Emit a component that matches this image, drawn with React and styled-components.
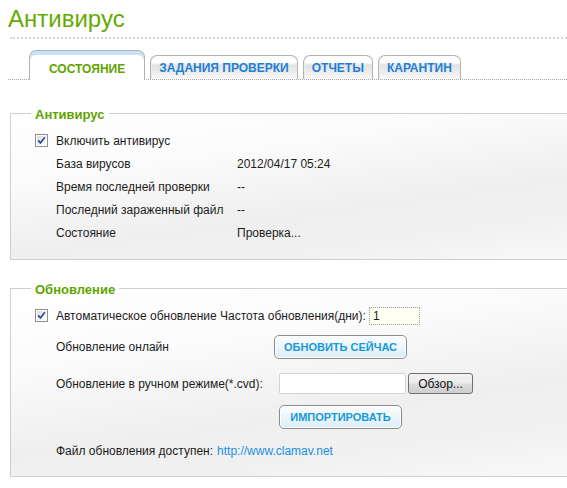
import React from 'react';
import styled, { createGlobalStyle } from 'styled-components';

const GlobalStyle = createGlobalStyle`
  html, body {
    margin: 0;
    padding: 0;
    background: #ffffff;
    overflow: hidden;
  }
  body {
    font-family: 'Liberation Sans', Arial, sans-serif;
    font-size: 12px;
    color: #1c1c1c;
  }
`;

const Page = styled.div`
  padding: 5px 0 0 8px;
  width: 559px;
`;

const Title = styled.h1`
  margin: 0;
  font-family: 'Liberation Sans', Arial, sans-serif;
  font-weight: normal;
  font-size: 24px;
  line-height: 28px;
  color: #66aa00;
`;

const Divider = styled.div`
  margin: 4px 0 0 2px;
  border-top: 2px dotted #d9d9d9;
`;

const TabBar = styled.div`
  display: flex;
  align-items: flex-end;
  gap: 5px;
  margin-top: 11px;
  padding-left: 21px;
  border-bottom: 1px dotted #a8a8a8;
`;

const Tab = styled.div`
  box-sizing: border-box;
  height: ${(p) => (p.$active ? '30px' : '24px')};
  margin-bottom: ${(p) => (p.$active ? '-1px' : '0')};
  padding: ${(p) => (p.$active ? '11px 19px 0' : '5px 8px 0')};
  border: 1px solid #b3b3b3;
  border-bottom: none;
  border-radius: 7px 7px 0 0;
  font-weight: bold;
  font-size: 12px;
  line-height: 14px;
  white-space: nowrap;
  color: ${(p) => (p.$active ? '#5fa400' : '#1f80d6')};
  background: ${(p) =>
    p.$active
      ? '#ffffff'
      : 'linear-gradient(to bottom, #ffffff 0%, #ffffff 28%, #e3e3e3 40%, #eeeeee 75%, #fafafa 100%)'};
  box-shadow: ${(p) => (p.$active ? 'inset 0 4px 0 #c6e3fa' : 'inset 1px 0 0 #ececec')};
`;

const Section = styled.fieldset`
  margin: ${(p) => p.$top}px -20px 0 2px;
  padding: 0 0 ${(p) => p.$bottom}px 24px;
  border: 1px solid #cfcfcf;
  background: linear-gradient(172deg, #ffffff 0%, #fbfbfb 30%, #efefef 62%, #f1f1f1 80%, #f9f9f9 100%);
`;

const Legend = styled.legend`
  margin-left: -4px;
  padding: 4px 4px 0;
  font-weight: bold;
  font-size: 13px;
  line-height: 16px;
  color: #5ea400;
`;

const Row = styled.div`
  display: flex;
  align-items: center;
  min-height: 23px;
  margin-top: ${(p) => p.$gap || 0}px;
  padding-left: ${(p) => (p.$indent ? '21px' : '0')};
  white-space: nowrap;
`;

const Label = styled.span`
  display: inline-block;
  width: ${(p) => (p.$w ? `${p.$w}px` : 'auto')};
  flex-shrink: 0;
`;

const Box = styled.span`
  display: inline-flex;
  width: 13px;
  height: 13px;
  margin-right: 8px;
`;

const DaysInput = styled.span`
  box-sizing: border-box;
  display: inline-block;
  width: 51px;
  height: 18px;
  margin-left: 3px;
  padding: 1px 3px;
  border: 1px dotted #9a9a9a;
  background: #fffff2;
  line-height: 14px;
`;

const ActionButton = styled.button`
  box-sizing: border-box;
  width: ${(p) => p.$w}px;
  height: 24px;
  margin-left: ${(p) => p.$ml || 0}px;
  padding: 0;
  border: 1px solid #8c8c8c;
  border-radius: 5px;
  background: linear-gradient(to bottom, #fbfdfe 0%, #eef6fb 45%, #dcedf7 100%);
  box-shadow: inset 0 0 0 1px #ffffff;
  font-family: 'Liberation Sans', Arial, sans-serif;
  font-weight: bold;
  font-size: 11px;
  color: #159ad9;
  cursor: pointer;
`;

const PathField = styled.span`
  box-sizing: border-box;
  display: inline-block;
  width: 127px;
  height: 21px;
  margin-left: 5px;
  border: 1px solid #d3d3d3;
  border-radius: 2px;
  background: #ffffff;
`;

const BrowseButton = styled.button`
  box-sizing: border-box;
  width: 65px;
  height: 21px;
  margin-left: 2px;
  padding: 0;
  border: 1px solid #707070;
  border-radius: 3px;
  background: linear-gradient(to bottom, #f3f3f3 0%, #ebebeb 48%, #dddddd 52%, #cfcfcf 100%);
  font-family: 'Liberation Sans', Arial, sans-serif;
  font-size: 12px;
  color: #111111;
`;

const Link = styled.a`
  margin-left: 4px;
  color: #1b8fe0;
  text-decoration: none;
`;

const CheckBox = () => (
  <Box>
    <svg width="13" height="13" viewBox="0 0 13 13">
      <defs>
        <linearGradient id="cbFill" x1="0" y1="0" x2="1" y2="1">
          <stop offset="0" stopColor="#dcdcdc" />
          <stop offset="1" stopColor="#ffffff" />
        </linearGradient>
      </defs>
      <rect x="0.5" y="0.5" width="12" height="12" fill="#ffffff" stroke="#8f8f8f" />
      <rect x="2" y="2" width="9" height="9" fill="url(#cbFill)" />
      <path d="M3.2 6.4 L5.4 8.9 L9.8 3.2" fill="none" stroke="#2b4a9c" strokeWidth="1.7" />
    </svg>
  </Box>
);

const status = [
  ['База вирусов', '2012/04/17 05:24'],
  ['Время последней проверки', '--'],
  ['Последний зараженный файл', '--'],
  ['Состояние', 'Проверка...'],
];

const tabs = ['СОСТОЯНИЕ', 'ЗАДАНИЯ ПРОВЕРКИ', 'ОТЧЕТЫ', 'КАРАНТИН'];

export default function App() {
  return (
    <>
      <GlobalStyle />
      <Page>
        <Title>Антивирус</Title>
        <Divider />
        <TabBar>
          {tabs.map((t, i) => (
            <Tab key={t} $active={i === 0}>
              {t}
            </Tab>
          ))}
        </TabBar>

        <Section $top={23} $bottom={15}>
          <Legend>Антивирус</Legend>
          <Row $gap={6}>
            <CheckBox />
            <Label>Включить антивирус</Label>
          </Row>
          {status.map(([name, value]) => (
            <Row key={name} $indent>
              <Label $w={181}>{name}</Label>
              <Label>{value}</Label>
            </Row>
          ))}
        </Section>

        <Section $top={18} $bottom={14}>
          <Legend>Обновление</Legend>
          <Row $gap={6}>
            <CheckBox />
            <Label>Автоматическое обновление Частота обновления(дни):</Label>
            <DaysInput>1</DaysInput>
          </Row>
          <Row $gap={8} $indent>
            <Label $w={218}>Обновление онлайн</Label>
            <ActionButton $w={133}>ОБНОВИТЬ СЕЙЧАС</ActionButton>
          </Row>
          <Row $gap={13} $indent>
            <Label $w={218}>Обновление в ручном режиме(*.cvd):</Label>
            <PathField />
            <BrowseButton>Обзор...</BrowseButton>
          </Row>
          <Row $gap={10} $indent>
            <Label $w={218} />
            <ActionButton $w={123} $ml={5}>ИМПОРТИРОВАТЬ</ActionButton>
          </Row>
          <Row $gap={10} $indent>
            <Label>Файл обновления доступен:</Label>
            <Link href="#">http://www.clamav.net</Link>
          </Row>
        </Section>
      </Page>
    </>
  );
}
